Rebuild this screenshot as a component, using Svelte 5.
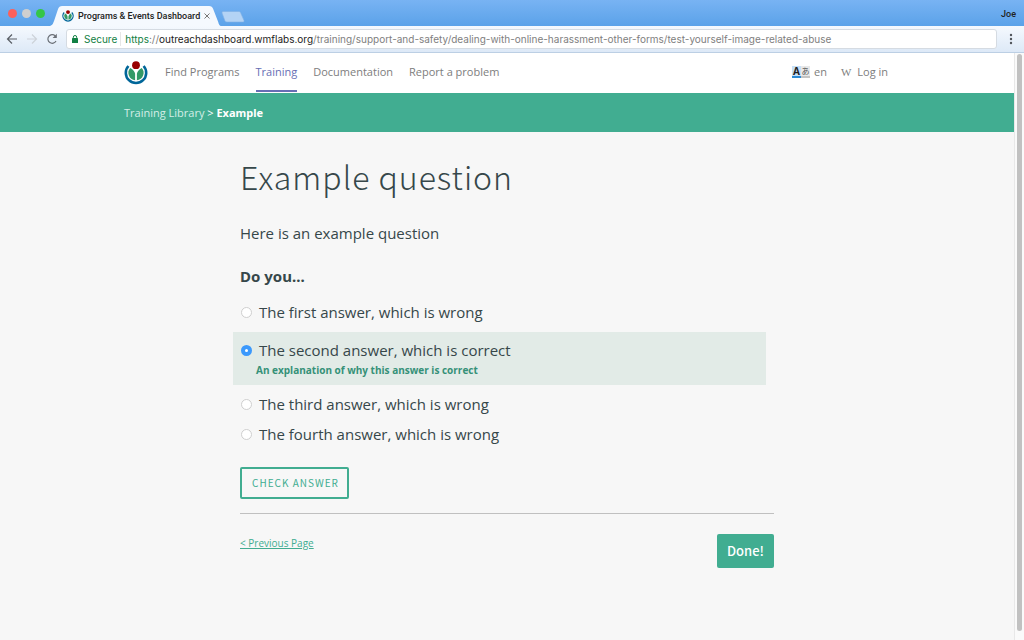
<script>
  const navLinks = [
    { label: 'Find Programs', active: false },
    { label: 'Training', active: true },
    { label: 'Documentation', active: false },
    { label: 'Report a problem', active: false }
  ];

  const answers = [
    { id: 1, text: 'The first answer, which is wrong' },
    {
      id: 2,
      text: 'The second answer, which is correct',
      explanation: 'An explanation of why this answer is correct'
    },
    { id: 3, text: 'The third answer, which is wrong' },
    { id: 4, text: 'The fourth answer, which is wrong' }
  ];

  let selected = $state(2);
</script>

{#snippet logo(size)}
  <svg width={size} height={size} viewBox="0 0 24 24" aria-hidden="true">
    <path d="M4.400 5a10.200 10.200 0 1 0 15.200 0" fill="none" stroke="#069" stroke-width="2.600" />
    <path d="M6.300 7a7.400 7.400 0 0 0 4.800 12.300v-6.500q-.5-3.300-4.800-5.800z" fill="#396" />
    <path d="M17.700 7a7.400 7.400 0 0 1-4.800 12.300v-6.500q.5-3.300 4.800-5.800z" fill="#396" />
    <circle cx="12" cy="4.200" r="3.900" fill="#900" />
  </svg>
{/snippet}

<div class="browser">
  <header class="tab-bar">
    <div class="lights">
      <span class="light red"></span>
      <span class="light grey"></span>
      <span class="light green"></span>
    </div>
    <div class="tab">
      <svg class="tab-shape" viewBox="0 0 170 20" preserveAspectRatio="none" aria-hidden="true">
        <path d="M0 20C3 19 3 17 4 15L8 3Q9 0 12 0H158Q161 0 162 3L167 16Q168 20 170 20z" fill="#f5f9fe" />
      </svg>
      {@render logo(12)}
      <span class="tab-title">Programs &amp; Events Dashboard</span>
      <button class="tab-close" type="button" aria-label="Close tab">
        <svg width="6" height="6" viewBox="0 0 6 6">
          <path d="M.5.5l5 5M5.500.5l-5 5" stroke="#777" />
        </svg>
      </button>
    </div>
    <button class="new-tab" type="button" aria-label="New tab">
      <svg width="24" height="12" viewBox="0 0 24 12">
        <path d="M2 .5h16q1 0 1.500 1l3.500 8q.5 1.500-1 1.500h-16q-1.500 0-2-1l-3-8q-.5-1.500 1-1.500z" fill="#b3d3f5" stroke="#7fb0e4" stroke-width=".6" />
      </svg>
    </button>
    <span class="profile">Joe</span>
  </header>

  <div class="toolbar">
    <button type="button" aria-label="Back">
      <svg width="12" height="12" viewBox="0 0 12 12">
        <path d="M11 6H2M6 1.500L1.500 6 6 10.500" fill="none" stroke="#5a5f66" stroke-width="1.200" />
      </svg>
    </button>
    <button type="button" aria-label="Forward" disabled>
      <svg width="12" height="12" viewBox="0 0 12 12">
        <path d="M1 6h9M6 1.500L10.500 6 6 10.500" fill="none" stroke="#cdd2d9" stroke-width="1.200" />
      </svg>
    </button>
    <button type="button" aria-label="Reload">
      <svg width="12" height="12" viewBox="0 0 12 12">
        <path d="M10 8a4.300 4.300 0 1 1-.8-5.100" fill="none" stroke="#6a6f76" stroke-width="1.200" />
        <path d="M10.800.8v4.200H6.600z" fill="#6a6f76" />
      </svg>
    </button>
    <div class="address">
      <svg width="6" height="8" viewBox="0 0 6 8" aria-hidden="true">
        <path d="M1.300 3.500V2.200a1.700 1.700 0 0 1 3.400 0v1.300" fill="none" stroke="#128044" />
        <rect y="3" width="6" height="5" rx=".6" fill="#128044" />
      </svg>
      <span class="secure">Secure</span>
      <span class="url"><span class="scheme">https</span>://<span class="host">outreachdashboard.wmflabs.org</span>/training/support-and-safety/dealing-with-online-harassment-other-forms/test-yourself-image-related-abuse</span>
    </div>
    <button type="button" aria-label="Menu">
      <svg width="12" height="12" viewBox="0 0 12 12">
        <g fill="#50555c">
          <circle cx="6" cy="2" r="1.200" />
          <circle cx="6" cy="6" r="1.200" />
          <circle cx="6" cy="10" r="1.200" />
        </g>
      </svg>
    </button>
  </div>

  <div class="viewport">
    <div class="page">
      <nav class="top-nav">
        <div class="container">
          <a class="home" href="/" aria-label="Home">{@render logo(24)}</a>
          <ul class="links">
            {#each navLinks as link}
              <li><a href="#top" class:active={link.active}>{link.label}</a></li>
            {/each}
          </ul>
          <a class="language" href="#lang">
            <span class="lang-icon" aria-hidden="true"><b>A</b><i>あ</i></span>
            en
          </a>
          <a class="login" href="#login">
            <span class="wiki" aria-hidden="true">W</span>
            Log in
          </a>
        </div>
      </nav>

      <div class="breadcrumbs">
        <div class="container">
          <span><a href="#library">Training Library</a> &gt; <strong>Example</strong></span>
        </div>
      </div>

      <main>
        <h1>Example question</h1>
        <p class="intro">Here is an example question</p>

        <form onsubmit={(e) => e.preventDefault()}>
          <fieldset>
            <legend>Do you...</legend>
            {#each answers as answer (answer.id)}
              <div class="answer" class:correct={answer.explanation && selected === answer.id}>
                <label>
                  <input type="radio" name="answer" value={answer.id} bind:group={selected} />
                  {answer.text}
                </label>
                {#if answer.explanation && selected === answer.id}
                  <p class="explanation">{answer.explanation}</p>
                {/if}
              </div>
            {/each}
          </fieldset>
          <button class="check" type="submit">CHECK ANSWER</button>
        </form>

        <footer>
          <a class="previous" href="#previous">&lt; Previous Page</a>
          <a class="done" href="#done">Done!</a>
        </footer>
      </main>
    </div>
    <div class="scrollbar"><div class="thumb"></div></div>
  </div>
</div>

<style>
  :global(body) {
    margin: 0;
  }

  .browser {
    display: flex;
    flex-direction: column;
    min-height: 100vh;
    font-family: 'Open Sans', sans-serif;
    color: #36474a;
    background: #f7f7f7;
  }

  button {
    border: 0;
    padding: 0;
    background: none;
    font: inherit;
  }

  svg {
    display: block;
    flex: none;
  }

  .tab-bar {
    display: flex;
    align-items: flex-end;
    height: 26px;
    padding-right: 8px;
    background: linear-gradient(#78b3f3, #5ba2e9);
    font: 500 9px/12px Roboto, sans-serif;
    color: #222;
  }

  .lights {
    display: flex;
    gap: 5px;
    padding: 0 5px 8px 8px;
  }

  .light {
    width: 9px;
    height: 9px;
    border-radius: 50%;
  }

  .red {
    background: #fc605b;
  }

  .grey {
    background: #cfcfcf;
  }

  .green {
    background: #34c648;
  }

  .tab {
    position: relative;
    display: flex;
    align-items: center;
    gap: 4px;
    height: 20px;
    padding: 0 11px 0 12px;
  }

  .tab > :global(svg),
  .tab-title,
  .tab-close {
    position: relative;
  }

  .tab .tab-shape {
    position: absolute;
    inset: 0;
    width: 100%;
    height: 100%;
  }

  .new-tab {
    padding: 0 0 3px;
  }

  .profile {
    margin-left: auto;
    padding-bottom: 6px;
  }

  .toolbar {
    display: flex;
    align-items: center;
    gap: 8px;
    height: 26px;
    padding: 0 7px 0 6px;
    border-bottom: 1px solid #bccfe4;
    background: linear-gradient(#f5f9fe, #dde9f7);
  }

  .address {
    display: flex;
    flex: 1;
    align-items: center;
    min-width: 0;
    height: 18px;
    padding-left: 5px;
    border: 1px solid #d5dbe2;
    border-radius: 3px;
    background: #fff;
    font: 10px/18px Inter, sans-serif;
    color: #808080;
    white-space: nowrap;
    overflow: hidden;
  }

  .secure {
    margin: 0 4px 0 6px;
    padding-right: 3px;
    border-right: 1px solid #e6e6e6;
    line-height: 14px;
    color: #128044;
  }

  .scheme {
    color: #128044;
  }

  .host {
    color: #222;
  }

  .viewport {
    display: flex;
    flex: 1;
  }

  .page {
    flex: 1;
    min-width: 0;
  }

  .scrollbar {
    display: flex;
    width: 10px;
    box-sizing: border-box;
    padding: 1px 2px 9px;
    border-left: 1px solid #e8e8e8;
    background: #fafafa;
  }

  .thumb {
    flex: 1;
    border-radius: 3px;
    background: #c1c1c1;
  }

  .container {
    display: flex;
    align-items: center;
    width: 100%;
    max-width: 766px;
    margin: 0 auto;
  }

  .top-nav {
    background: #fff;
    font-size: 11px;
    line-height: 16px;
  }

  .top-nav .container {
    height: 40px;
  }

  .top-nav a {
    color: #7d7d7d;
    text-decoration: none;
  }

  .links {
    display: flex;
    gap: 16px;
    margin: 0 auto 0 17px;
    padding: 0;
    list-style: none;
  }

  .links a {
    display: block;
    padding: 10px 0;
    border-bottom: 2px solid transparent;
  }

  .top-nav .links a.active {
    border-color: #676eb4;
    color: #676eb4;
  }

  .language,
  .login {
    display: flex;
    align-items: center;
    gap: 4px;
    padding-bottom: 2px;
  }

  .login {
    gap: 6px;
    margin: 0 2px 0 14px;
  }

  .lang-icon {
    display: flex;
    text-align: center;
  }

  .lang-icon b,
  .lang-icon i {
    width: 9px;
    border-bottom: 2px solid #2a8ad4;
    background: #c7e0f7;
    font: bold 10px/10px 'Open Sans', sans-serif;
    color: #222;
  }

  .lang-icon i {
    border-color: #c4c4c4;
    background: #e8e8e8;
    font: 8px/10px 'Noto Sans CJK JP', sans-serif;
    color: #555;
  }

  .wiki {
    font: 11px/16px 'Liberation Serif', serif;
  }

  .breadcrumbs {
    background: #41ad91;
    font-size: 11px;
    line-height: 16px;
    color: #fff;
  }

  .breadcrumbs .container {
    height: 39px;
  }

  .breadcrumbs a {
    color: #d4eee7;
    text-decoration: none;
  }

  .breadcrumbs strong {
    font-family: 'Noto Sans', sans-serif;
  }

  main {
    max-width: 534px;
    margin: 0 auto;
    padding: 20px 0;
  }

  h1 {
    margin: 0;
    font: 300 32px/48px 'Noto Sans CJK SC', sans-serif;
    letter-spacing: 1px;
  }

  .intro {
    margin: 21px 0 19px;
    font-size: 15px;
    line-height: 24px;
  }

  fieldset {
    min-width: 0;
    margin: 0;
    padding: 0;
    border: 0;
  }

  legend {
    margin-bottom: 9px;
    padding: 0;
    font: 700 15px/24px 'Noto Sans', sans-serif;
  }

  .answer {
    margin: 0 8px 0 -7px;
    padding: 3px 8px;
    font-size: 15px;
    line-height: 24px;
  }

  .answer.correct {
    margin-top: 5px;
    margin-bottom: 4px;
    padding-top: 6px;
    padding-bottom: 7px;
    background: #e2ebe7;
  }

  .answer label {
    display: flex;
    align-items: center;
    gap: 7px;
  }

  .answer input {
    appearance: none;
    box-sizing: border-box;
    width: 11px;
    height: 11px;
    margin: 0;
    border: 1px solid #cfcfcf;
    border-radius: 50%;
    background: #fff;
  }

  .answer input:checked {
    border: 4px solid #3b99fc;
  }

  .explanation {
    margin: 0 0 0 15px;
    font-size: 10px;
    font-weight: 700;
    line-height: 16px;
    color: #359178;
  }

  .check {
    margin: 18px 0 14px;
    padding: 0 8px 0 10px;
    border: 2px solid #41ad91;
    border-radius: 2px;
    font: 10px/28px 'Noto Sans CJK SC', sans-serif;
    letter-spacing: 1px;
    color: #41ad91;
  }

  footer {
    display: flex;
    align-items: flex-start;
    justify-content: space-between;
    padding-top: 20px;
    border-top: 1px solid #c0c0c0;
  }

  .previous {
    font-size: 10px;
    line-height: 18px;
    color: #41ad91;
  }

  .done {
    padding: 0 10px;
    border-radius: 2px;
    background: #41ad91;
    font: 500 13px/34px 'Noto Sans CJK SC', sans-serif;
    color: #fff;
    text-decoration: none;
  }
</style>
